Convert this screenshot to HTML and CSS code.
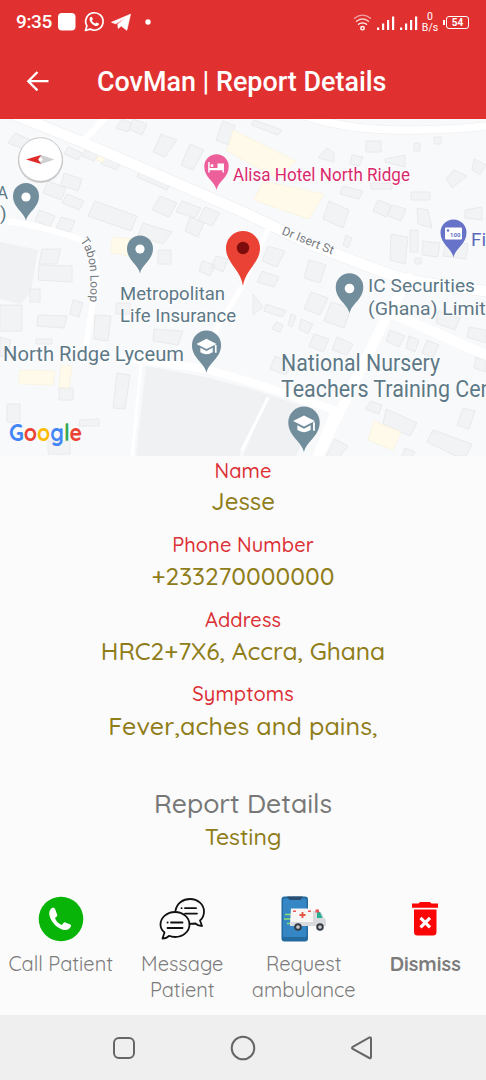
FILE: index.html
```html
<!DOCTYPE html>
<html lang="en">
<head>
<meta charset="utf-8">
<title>CovMan | Report Details</title>
<link rel="stylesheet" href="styles.css">
</head>
<body>
<header class="header">
  <div class="status">
    <span class="clock">9:35</span>
    <svg class="status-apps" viewBox="57 8 98 28" width="98" height="28">
      <rect x="58" y="13" width="17.500" height="17.500" rx="4" fill="#fff"/>
      <path d="M85.500 30.500l1.400-4.600a8.700 8.700 0 1 1 3.300 3.200z" fill="none" stroke="#fff" stroke-width="1.700" stroke-linejoin="round"/>
      <path d="M91 16.800c-2.300 1.300-1.500 4.500.6 6.600s5.400 3.700 6.900 1.700c.7-1 .4-1.500-.2-1.900l-1.800-.8-1.300 1.200c-1.500-.5-2.700-1.600-3.300-3l1-1.300-.8-2z" fill="#fff"/>
      <path d="M111.500 22.300L130.500 14.200L126.800 30.300L121.200 26L118.200 28.400L117.800 24.300L125.800 17.800L115.800 23.800Z" fill="#fff" stroke="#fff" stroke-width=".7" stroke-linejoin="round"/>
      <circle cx="148" cy="22" r="2.700" fill="#fff"/>
    </svg>
    <svg class="status-signal" viewBox="352 8 66 26" width="66" height="26">
      <g fill="none" stroke="#fff" stroke-width="1.400" stroke-linecap="round">
        <path d="M354.500 17.200q8-6.200 16 0" opacity=".55"/>
        <path d="M356.500 20.300q6-4.500 12 0" opacity=".75"/>
        <path d="M358.500 23.300q4-2.800 8 0"/>
        <circle cx="362.500" cy="27.200" r="1.700"/>
      </g>
      <g fill="#fff">
        <path d="M377 26.500h2.200v2.500h-2.200zM382 22.500h2.200v6.500h-2.200zM387 19h2.200v10H387zM392 15.500h2.200V29H392z"/>
        <path d="M400 26.500h2.200v2.500h-2.200zM405 22.500h2.200v6.500h-2.200zM410 19h2.200v10H410zM415 15.500h2.200V29H415z"/>
      </g>
    </svg>
    <div class="rate"><span>0</span><span>B/s</span></div>
    <div class="battery"><i class="battery-tip"></i><span class="battery-level">54</span></div>
  </div>
  <div class="appbar">
    <svg class="back" viewBox="0 0 24 24" width="24" height="24"><path d="M22.500 11.200H2.500M11.500 2L2.300 11.200l9.200 9.200" fill="none" stroke="#fff" stroke-width="2.300"/></svg>
    <h1 class="title">CovMan | Report Details</h1>
  </div>
</header>

<svg class="map" viewBox="0 119 486 337" width="486" height="337">
  <defs>
    <path id="pin" d="M0 0C-1.500-9-13-13-13-25A13 13 0 0 1 13-25C13-13 1.500-9 0 0Z"/>
    <path id="cap" d="M-9-26L0-30.500L9-26L0-21.500ZM-5.500-22.500L0-19.700L5.500-22.500V-18.500Q0-15 -5.500-18.500ZM7.500-25H9V-18H7.500Z"/>
    <path id="loop" d="M80 241Q93 256 90 300"/>
  </defs>
  <rect y="119" width="486" height="337" fill="#f8f9fb"/>
  <g fill="#f0f1f3">
    <path d="M146 366L205 377L243 387L267 396L239 456H136Z"/>
    <path d="M243 386L317 411L296 456H243L267 397Z"/>
    <path d="M0 242L38 250L31 292L21 304L0 299Z"/>
  </g>
  <g fill="#f2f3f5" stroke="#e9eaec" stroke-width="1">
    <path d="M15 133l18 8-5 10-20-8zM68 147l14 6-4 7-14-6zM85 150l13 5-4 6-12-5zM105 155l16 6-4 9-16-6z"/>
    <path d="M122 119l10 4-4 9-12-4zM133 119l14 5-5 11-13-6zM161 134l16 6-12 17-12-5zM190 144l14 6-11 20-12-5zM223 121l12 5-7 19-12-5z"/>
    <path d="M48 181l18 7-5 12-18-7zM64 173l18 6-4 12-17-6zM67 194l17 7-5 9-17-7zM39 210l16 6-5 11-15-6zM61 217l14 4-5 11-14-4z"/>
    <path d="M95 201l42 15-6 15-43-15zM143 223l29 9-9 12-25-8zM160 196l17 7-8 14-17-7zM182 201l19 7-6 10-19-6zM205 207l15 6-8 13-14-6zM190 217l14 6-6 14-13-6zM139 172l31 12-3 6-30-13z"/>
    <path d="M42 249h19l-4 15H39zM39 265l33 1v16l-34-2zM158 250h13v14h-13zM202 261l13 4-5 11-11-5zM216 256l12 3-5 13-12-5z"/>
    <path d="M0 305h22v26H0zM38 315l29 1-3 12-27-2zM73 300l10 3-4 14-9-3zM95 315l16 1-3 25-14-2zM116 303h14v11h-14zM154 329l29 2-5 14-25-4zM117 373l13 2-5 34-12-1zM59 388h14v12H59zM7 404h13v18H7zM80 420l19-1v7H79zM48 441h22v13H48zM36 339h16v5H36zM30 289h10v13H30z"/>
    <path d="M254 120l28 10-4 5-27-10zM318 158l9-10 7 5v9zM366 141h15v11h-15zM414 143h6v8h-6zM434 137h7v7h-7zM352 155l11 2-4 9-9-2zM385 159l20-4v12l-20-5zM343 186l20 5-4 8-19-5zM371 183h21v6h-21z"/>
    <path d="M411 192h19v8h-19zM454 170l13 6-15 12-6-9zM474 159l12 6-6 10-8-5zM465 210l17-3v13l-17-2zM378 200l13 5-5 12-13-6zM392 205l14 4-5 12-13-5zM417 208l11 2 4 18-14-4zM329 201l20 9-6 18-20-9z"/>
    <path d="M391 234l17 3-3 27-15-4zM410 230h8v22h-8zM415 258h6v6h-6zM423 241l17 2-2 14-16-2zM446 242l22 2-2 15-23-3zM268 246l17 5-8 16-15-6zM262 271l17 6-5 10-17-5zM309 260l17 5-6 18-16-5zM346 235l6 3-4 10-5-3z"/>
    <path d="M253 294l10 13-10 8zM266 304l20 7-4 6-18-6zM276 322l7 3-3 7-8-3zM291 314l5 2-4 11-4-2zM301 319l12 5-5 10-9-5zM311 292l17 6-8 17-16-6zM331 302l20 6-7 20-20-7zM314 334l15 5-6 13-14-6zM337 337l16 7-6 11-15-5zM275 356l17 7-6 12-16-6z"/>
    <path d="M390 330l15 6-6 11-13-6zM409 336l10 4-4 12-9-4zM427 340l12 5-6 13-11-5zM438 311l22 7-5 12-19-7zM469 327l17 3v13l-19-6zM476 357l10 3v12l-12-4zM371 401l11 4-3 9-14-5zM386 409l31 14-7 13-27-12zM433 430l39 14-6 12h-10l-29-14zM463 408l12 3-6 18-12-4zM405 448l10 4-4 6h-10zM335 439l13 7-9 12h-14zM0 337l11 3-4 18-7-2z"/>
  </g>
  <g fill="#fffae9" stroke="#f8f3e0" stroke-width=".8">
    <path d="M233 130l63 31-18 18-51-28z"/><path d="M263 181l61 13-15 25-55-19z"/>
    <path d="M112 237l22 2-4 17-19-3z"/><path d="M20 370l35 1-2 14-34-1z"/><path d="M61 365l11 1-3 22-10-1z"/><path d="M374 421l27 11-8 18-25-10z"/><path d="M98 155l7 3-2 4-7-2z"/>
  </g>
  <g fill="none" stroke="#eff0f2" stroke-linejoin="round" stroke-linecap="round">
    <path stroke-width="12" d="M8 112L82 142L243 212L310 244L383 272Q410 283 486 291"/>
    <path stroke-width="9" d="M305 116Q348 130 400 130T486 126"/>
  </g>
  <g fill="none" stroke="#fff" stroke-linejoin="round" stroke-linecap="round">
    <path stroke-width="10.500" d="M8 112L82 142L243 212L310 244L383 272Q410 283 486 291"/>
    <path stroke-width="7.500" d="M305 116Q348 130 400 130T486 126"/>
    <path stroke-width="6" d="M107 116L83 141M-2 221Q30 222 79 239Q103 255 95 290L86 345"/>
    <path stroke-width="5" d="M268 229L243 285L218 326L205 365"/>
    <path stroke-width="8" d="M136 359L205 369L244 380L335 410L316 458"/>
    <path stroke-width="10" d="M409 278L384 322L316 460M386 311L486 355"/>
    <path stroke-width="3" d="M141 364L132 458M268 398L242 450"/>
  </g>
  <g class="poi">
    <text x="-3" y="199" textLength="11" lengthAdjust="spacingAndGlyphs">A</text><text x="0" y="220">)</text>
    <text x="120" y="299.500" textLength="105" lengthAdjust="spacingAndGlyphs">Metropolitan</text>
    <text x="120" y="321.500" textLength="116" lengthAdjust="spacingAndGlyphs">Life Insurance</text>
    <text x="3" y="361" textLength="181" lengthAdjust="spacingAndGlyphs" class="poi-mid">North Ridge Lyceum</text>
    <text x="368" y="291.500" textLength="107" lengthAdjust="spacingAndGlyphs">IC Securities</text>
    <text x="368" y="314.500" textLength="139" lengthAdjust="spacingAndGlyphs">(Ghana) Limited</text>
    <text x="281" y="371" textLength="159" lengthAdjust="spacingAndGlyphs" class="poi-big">National Nursery</text>
    <text x="281" y="397" textLength="237" lengthAdjust="spacingAndGlyphs" class="poi-big">Teachers Training Center</text>
    <text x="233" y="180.500" textLength="177" lengthAdjust="spacingAndGlyphs" class="hotel">Alisa Hotel North Ridge</text>
    <text x="471" y="246" class="bank">First</text>
  </g>
  <text class="street" transform="translate(281 234) rotate(22)" textLength="55" lengthAdjust="spacingAndGlyphs">Dr Isert St</text>
  <text class="street"><textPath href="#loop">Tabon Loop</textPath></text>
  <g fill="#728e9c">
    <g transform="translate(26 221)"><use href="#pin"/><circle cy="-24" r="4.600" fill="#fff"/></g>
    <g transform="translate(140 273.500)"><use href="#pin"/><circle cy="-24.500" r="4.600" fill="#fff"/></g>
    <g transform="translate(349.500 313.500)"><use href="#pin" transform="scale(1.060)"/><circle cy="-25" r="4.800" fill="#fff"/></g>
    <g transform="translate(206.500 373) scale(1.120)"><use href="#pin"/><use href="#cap" fill="#fff"/></g>
    <g transform="translate(304 452.500) scale(1.210)"><use href="#pin"/><use href="#cap" fill="#fff"/></g>
  </g>
  <g transform="translate(216.500 190)"><use href="#pin" transform="scale(.94)" fill="#ec5f9a"/><path d="M-8.300-28h1.500v6H1v-4.500h6.500v9H6v-2.200H-6.800v2.200h-1.500zM-4.500-26a1.500 1.500 0 1 1 0 3 1.500 1.500 0 1 1 0-3z" fill="#fff"/></g>
  <g transform="translate(453.500 257.500)"><use href="#pin" fill="#6673c8"/><rect x="-8.500" y="-30" width="17" height="12" rx="1" fill="#fff"/><circle cx="-5.500" cy="-27" r="1.300" fill="#6673c8"/><text x="-3.500" y="-20.500" class="note">100</text></g>
  <path d="M243 286C241 270 226 263 226 248A17 17 0 0 1 260 248C260 263 245 270 243 286Z" fill="#ea4335"/>
  <circle cx="243" cy="248" r="6.200" fill="#7d0c0c"/>
  <circle cx="40.500" cy="160.500" r="22.500" fill="#aaa" opacity=".55"/>
  <circle cx="40.500" cy="159.500" r="21.800" fill="#fff" stroke="#bbb" stroke-width=".8"/>
  <path d="M26 159.500L41 155V164Z" fill="#e02b2b"/><path d="M54.500 159.500L41 155L38.500 159.500L41 164Z" fill="#d0d0d0"/><circle cx="40.500" cy="159.500" r="2" fill="#fff"/>
  <text class="logo" x="9" y="440.500" textLength="73" lengthAdjust="spacingAndGlyphs"><tspan fill="#4285f4">G</tspan><tspan fill="#ea4335">o</tspan><tspan fill="#fbbc05">o</tspan><tspan fill="#4285f4">g</tspan><tspan fill="#34a853">l</tspan><tspan fill="#ea4335">e</tspan></text>
</svg>

<main class="details">
  <dl class="fields">
    <div class="field"><dt>Name</dt><dd class="v-name">Jesse</dd></div>
    <div class="field"><dt>Phone Number</dt><dd>+233270000000</dd></div>
    <div class="field"><dt>Address</dt><dd>HRC2+7X6, Accra, Ghana</dd></div>
    <div class="field"><dt>Symptoms</dt><dd class="v-symptoms">Fever,aches and pains,</dd></div>
  </dl>
  <h2 class="report-title">Report Details</h2>
  <p class="report-text">Testing</p>
  <div class="actions">
    <div class="action">
      <svg viewBox="0 0 46 46" width="46" height="46"><circle cx="23" cy="23" r="22.300" fill="#07b407"/><path d="M14 12c-3 2-3.500 5.500-1.500 10.500 3 6 7 9.500 12.500 11.200 3.500 1 7-.5 8-3.700.2-.9 0-1.300-.7-1.600l-5-2c-.8-.3-1.300 0-1.800.6l-1.700 2c-3.300-1.300-5.700-4-6.800-7l1.700-1.500c.6-.5.7-1 .5-1.700l-2.200-6c-.4-1-1.900-1.400-3-.8z" fill="#fff"/></svg>
      <span class="act-label">Call Patient</span>
    </div>
    <div class="action">
      <svg viewBox="0 0 46 46" width="46" height="46" fill="none" stroke="#111" stroke-width="1.800" stroke-linejoin="round" stroke-linecap="round">
        <path d="M16.500 14.500C18 7 24 3 31 3c8 0 14 5.500 14 12.500 0 4-1.500 7-4 9l2 5.500c-3 0-5-1-6.500-2.500l-6 .3"/>
        <path d="M3.500 42.500l2-6C2.500 34 1.500 31.500 1.500 28.500 1.500 21.500 8 16 16 16s14.500 5.500 14.500 12.500S24 41 16 41c-2.200 0-4.300-.4-6-1.200-1.500 1.700-4 2.700-6.500 2.700z"/>
        <path d="M26 12.200h11M26 17.600h12M22.500 12.200h.2M12 26.500h11.500M8.500 26.500h.2M8.500 32h15"/>
      </svg>
      <span class="act-label">Message<br>Patient</span>
    </div>
    <div class="action">
      <svg viewBox="0 0 46 46" width="46" height="46">
        <rect x=".5" y=".5" width="26.500" height="45" rx="3" fill="#236a9f"/><rect x="2" y="2.500" width="23.500" height="38.500" rx="1.500" fill="#3486c4"/><path d="M6 .5h16l-2.500 3.500h-11z" fill="#294f72"/>
        <path d="M4 18.500h8M3 23h8M6 27.500h7" stroke="#8dde73" stroke-width="1.300"/>
        <path d="M10 12.500h22v15H9z" fill="#f7f6f4"/><path d="M32 15h6q2 0 3 2.500l2 4.500 2 2v6H9v-4h23z" fill="#d8dade"/><path d="M36 16h3l2.500 6H36z" fill="#28ae91"/><path d="M34.500 13.500h3.500v3h-3.500zM12 14.500h3v1.500h-3zM27 14.500h3v1.500h-3z" fill="#eb5757"/><path d="M21.500 16v6M18.500 19h6" stroke="#e45443" stroke-width="1.800"/>
        <g fill="#c8cbd0" stroke="#343b43" stroke-width="1.900"><circle cx="17" cy="31" r="2.800"/><circle cx="39" cy="31" r="2.800"/></g>
      </svg>
      <span class="act-label">Request<br>ambulance</span>
    </div>
    <div class="action">
      <svg viewBox="0 0 46 46" width="46" height="46"><path d="M10 7.500h6.500L18 6h10l1.500 1.500H36v4.300H10zM12 13.500h22.500V36q0 3.500-3.500 3.500H15.500Q12 39.500 12 36z" fill="#fa0606"/><path d="M18.500 21.800l9.500 9.500M28 21.800l-9.500 9.500" stroke="#fff" stroke-width="3.200"/></svg>
      <span class="act-label act-strong">Dismiss</span>
    </div>
  </div>
</main>

<nav class="navbar">
  <svg viewBox="0 0 28 28" width="28" height="28"><rect x="4" y="4" width="20" height="20" rx="5"/></svg>
  <svg viewBox="0 0 28 28" width="28" height="28"><circle cx="14" cy="14" r="11.300"/></svg>
  <svg viewBox="0 0 28 28" width="28" height="28"><path d="M21.500 3.500Q23 3 23 4.800V22.800Q23 24.800 21.300 24L4.800 15Q3.200 14 4.800 12.800Z"/></svg>
</nav>
</body>
</html>
```

FILE: styles.css
```css
* { box-sizing: border-box; }
body {
  margin: 0;
  width: 486px;
  height: 1080px;
  overflow: hidden;
  display: flex;
  flex-direction: column;
  background: #fbfbfb;
  font-family: Quicksand, Lato, sans-serif;
}
h1, h2, p, dl, dt, dd { margin: 0; font-weight: 400; }

.header { height: 119px; flex: none; background: #e03130; color: #fff; font-family: Roboto, sans-serif; }
.status { display: flex; align-items: center; height: 44px; padding: 0 16px; }
.clock { width: 41px; font-size: 19px; font-weight: 500; line-height: 46px; letter-spacing: -.4px; }
.status-signal { margin-left: 197px; }
.rate { display: flex; flex-direction: column; align-items: center; width: 20px; margin-left: 2px; font-size: 10.500px; line-height: 11px; }
.battery { display: flex; align-items: center; gap: 1px; margin-left: 3px; }
.battery-tip { width: 2px; height: 5px; background: #fff; }
.battery-level { width: 23px; height: 13px; border: 1.500px solid #fff; border-radius: 3px; font-size: 10px; line-height: 11px; font-weight: 700; text-align: center; }
.appbar { display: flex; align-items: center; height: 75px; padding-left: 26px; }
.title { margin-left: 47px; font-size: 26.900px; font-weight: 500; line-height: 75px; padding-top: 2px; }

.map { display: block; flex: none; }
.poi { font-family: Roboto, sans-serif; font-size: 19px; fill: #5d7886; paint-order: stroke; stroke: #fff; stroke-width: 1.500px; }
.poi-mid { font-size: 20px; }
.poi-big { font-size: 23px; }
.hotel { font-size: 18px; fill: #d92a6c; }
.bank { font-size: 19px; fill: #5968ba; }
.street { font-family: Roboto, sans-serif; font-size: 12px; fill: #75797d; }
.note { font: 700 6px Roboto, sans-serif; fill: #6673c8; }
.logo { font-family: Quicksand, Lato, sans-serif; font-weight: 700; font-size: 23px; }

.details { flex: 1; padding-top: 2px; text-align: center; color: #8f7d19; }
.fields { display: flex; flex-direction: column; gap: 13.300px; }
dt { font-size: 20px; line-height: 26px; font-weight: 500; color: #dc2f34; letter-spacing: .1px; }
dd { font-size: 24.500px; line-height: 35px; font-weight: 500; }
.v-name { font-size: 24px; }
.v-symptoms { font-size: 25px; padding-top: 1px; letter-spacing: .1px; }
.report-title { margin-top: 43px; font-size: 26.500px; line-height: 34px; font-weight: 500; color: #777; }
.report-text { font-size: 23px; line-height: 34px; font-weight: 500; }
.actions { display: grid; grid-template-columns: repeat(4, 1fr); margin-top: 42px; }
.action { display: flex; flex-direction: column; align-items: center; gap: 9px; }
.act-label { font-size: 20px; line-height: 26px; font-weight: 400; color: #7c7c7c; }
.act-strong { font-weight: 700; }

.navbar { height: 65px; flex: none; display: flex; justify-content: center; align-items: center; gap: 91px; background: #efefef; }
.navbar svg { fill: none; stroke: #666; stroke-width: 2; }
```
